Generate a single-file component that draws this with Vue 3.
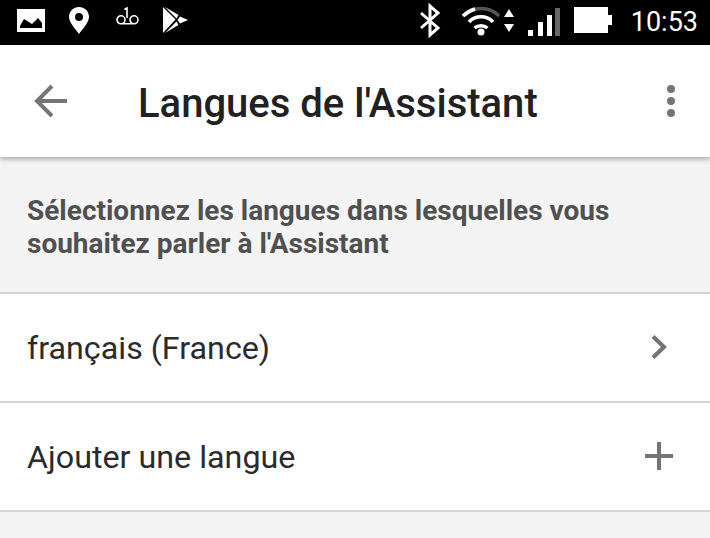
<script setup>
</script>

<template>
  <div class="screen">
    <div class="status">
      <svg class="gallery" width="28" height="23" viewBox="0 0 28 23"><path fill="#fff" fill-rule="evenodd" d="M0 0h28v23H0z M3 19h22v-5l-4-5-6 6-8-5-4 7z"/></svg>
      <svg class="pin" width="20" height="27" viewBox="0 0 20 27"><path fill="#fff" fill-rule="evenodd" d="M10 0C4.500 0 0 4.300 0 9.800 0 16 6.500 22 10 27c3.500-5 10-11 10-17.200C20 4.300 15.500 0 10 0zm0 6a4 4 0 1 1 0 8 4 4 0 0 1 0-8z"/></svg>
      <svg class="vm" width="23" height="18" viewBox="0 0 23 18"><path fill="none" stroke="#fff" stroke-width="1.600" d="M5 8.800a4 4 0 1 0 0 8 4 4 0 0 0 0-8zM18 8.800a4 4 0 1 0 0 8 4 4 0 0 0 0-8zM5 16.800h13M8.500 2.500L11 1v10"/></svg>
      <svg class="play" width="25" height="26" viewBox="0 0 25 26"><path fill="#fff" d="M0 0l12.500 12.500L0 26z"/><path fill="#fff" d="M2 0l13.500 8-2 3.500zM2 26l11.500-11.500 2 3.500zM17 9.500l8 3.500-8 3.500-2.500-3.500z"/></svg>
      <svg class="bt" width="22" height="35" viewBox="0 0 22 35"><path fill="none" stroke="#fff" stroke-width="3" d="M2 10l17 15-8 7V3l8 7L2 25"/></svg>
      <svg class="wifi" width="38" height="32" viewBox="0 0 38 32"><path fill="none" stroke="#555" stroke-width="3.500" d="M1 12C10 2 28 2 37 12"/><path fill="none" stroke="#fff" stroke-width="3.500" d="M1 12C4 9 8 6.500 13 5M7 18C13 11 25 11 31 18M12.500 24C16 21 22 21 25.500 24"/><circle cx="19" cy="28" r="3.500" fill="#fff"/></svg>
      <svg class="arrows" width="10" height="23" viewBox="0 0 10 23"><path fill="#fff" d="M5 0l5 8H0zM0 15h10l-5 8z"/></svg>
      <svg class="signal" width="32" height="28" viewBox="0 0 32 28"><rect x="0" y="22" width="5" height="6" fill="#fff"/><rect x="10" y="14" width="5" height="14" fill="#fff"/><rect x="19" y="7" width="5" height="21" fill="#fff"/><rect x="27" y="0" width="5" height="28" fill="#666"/></svg>
      <svg class="batt" width="38" height="26" viewBox="0 0 38 26"><path fill="#fff" d="M0 0h34v8h4v10h-4v8H0z"/></svg>
      <span class="clock">10:53</span>
    </div>
    <header class="bar">
      <svg class="back" width="34" height="34" viewBox="0 0 34 34"><path fill="none" stroke="#757575" stroke-width="4" d="M33 17H4M18 2L3 17l15 15"/></svg>
      <h1 class="title">Langues de l'Assistant</h1>
      <div class="dots"><i></i><i></i><i></i></div>
    </header>
    <div class="prompt">Sélectionnez les langues dans lesquelles vous<br>souhaitez parler à l'Assistant</div>
    <div class="row">
      <span>français (France)</span>
      <svg class="chev" width="16" height="24" viewBox="0 0 16 24"><path fill="none" stroke="#757575" stroke-width="4.200" d="M2 1.500L13 12 2 22.500"/></svg>
    </div>
    <div class="row">
      <span>Ajouter une langue</span>
      <svg class="plus" width="28" height="28" viewBox="0 0 28 28"><path fill="none" stroke="#757575" stroke-width="4" d="M14 0v28M0 14h28"/></svg>
    </div>
  </div>
</template>

<style>
html, body { margin: 0; overflow: hidden; }
</style>

<style scoped>
.screen {
  width: 710px;
  height: 538px;
  overflow: hidden;
  background: #f4f4f4;
  font-family: Roboto, "Liberation Sans", sans-serif;
}
.status {
  height: 45px;
  background: #000;
  display: flex;
  align-items: center;
  box-sizing: border-box;
  padding: 0 12px 5px 17px;
}
.pin { margin-left: 24px; }
.vm { margin: 0 0 9px 27px; }
.play { margin-left: 24px; }
.bt { margin-left: auto; }
.wifi { margin-left: 21px; }
.arrows { margin-left: 4px; }
.signal { margin: 4px 0 0 14px; }
.batt { margin-left: 14px; }
.clock { margin: 3px 0 0 19px; color: #fff; font-size: 27px; }
.bar {
  height: 112px;
  background: #fff;
  display: flex;
  align-items: center;
  position: relative;
  box-shadow: 0 2px 5px rgba(0,0,0,.32);
}
.back { margin-left: 34px; }
.title {
  margin: 0 0 0 70px;
  padding-top: 4px;
  font-size: 40px;
  font-weight: 500;
  color: #212121;
  flex: 1;
}
.dots {
  display: flex;
  flex-direction: column;
  gap: 4px;
  margin-right: 35px;
}
.dots i { width: 8px; height: 8px; background: #757575; border-radius: 50%; }
.prompt {
  height: 137px;
  box-sizing: border-box;
  padding: 37px 27px 0;
  font-size: 28px;
  line-height: 33px;
  font-weight: 700;
  color: #505050;
  border-bottom: 2px solid #d6d6d6;
}
.row {
  height: 109px;
  box-sizing: border-box;
  background: #fff;
  border-bottom: 2px solid #d6d6d6;
  display: flex;
  justify-content: space-between;
  align-items: center;
  padding: 0 37px 0 27px;
  font-size: 32.25px;
  color: #2b2b2b;
}
.chev { margin: 0 6px 2px 0; }
.plus { margin-bottom: 2px; }
</style>
